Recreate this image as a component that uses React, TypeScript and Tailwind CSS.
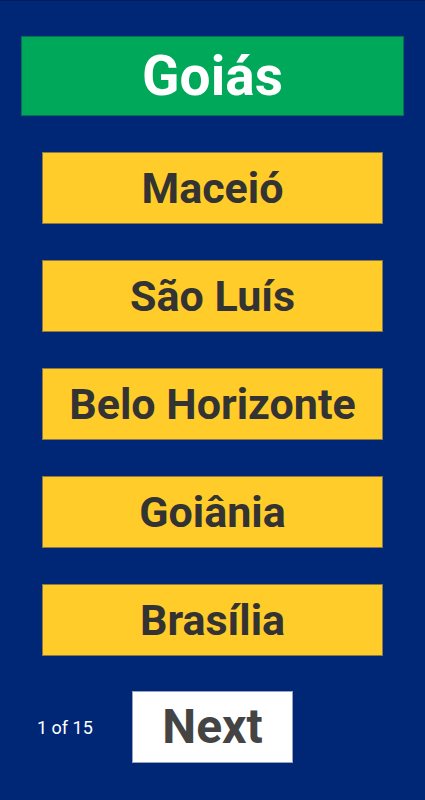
import { useState } from 'react';

const options = ['Maceió', 'São Luís', 'Belo Horizonte', 'Goiânia', 'Brasília'];

export default function App() {
  const [picked, setPicked] = useState<string | null>(null);

  return (
    <div
      className="w-[425px] h-[800px] bg-[#002776] border-t border-[#001a5c] flex flex-col"
      style={{ fontFamily: 'Roboto, "Noto Sans", sans-serif' }}
    >
      <div className="mx-[21px] mt-[35px] h-[80px] bg-[#00a859] border border-[#0b6e5a] flex items-center justify-center">
        <h1 className="text-[55px] font-bold text-white leading-none">Goiás</h1>
      </div>

      <div className="flex flex-col gap-[36px] mt-[36px] mx-[42px]">
        {options.map((o) => (
          <button
            key={o}
            type="button"
            onClick={() => setPicked(o)}
            className={`h-[72px] border border-[#8a7a4a] flex items-center justify-center text-[43px] font-bold leading-none text-[#333333] ${
              picked === o ? 'bg-[#f5c000]' : 'bg-[#ffcc29]'
            }`}
          >
            {o}
          </button>
        ))}
      </div>

      <div className="flex items-center mt-[35px]">
        <span className="w-[132px] pl-[37px] text-[18px] text-white">1 of 15</span>
        <button
          type="button"
          className="w-[161px] h-[72px] bg-white border border-[#9aa0c0] flex items-center justify-center text-[48px] font-bold leading-none text-[#444444]"
        >
          Next
        </button>
      </div>
    </div>
  );
}
